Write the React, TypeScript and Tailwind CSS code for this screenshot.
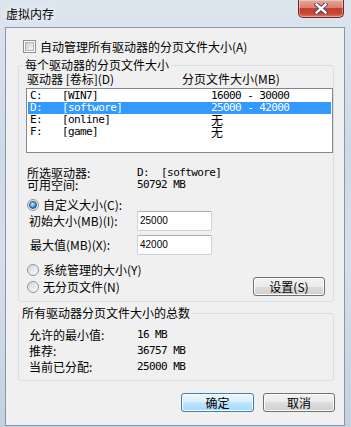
import React from 'react';

const drives = [
  { letter: 'C:', label: '[WIN7]', size: '16000 - 30000', selected: false },
  { letter: 'D:', label: '[softwore]', size: '25000 - 42000', selected: true },
  { letter: 'E:', label: '[online]', size: '无', selected: false },
  { letter: 'F:', label: '[game]', size: '无', selected: false },
];

const MONO = "font-['DejaVu_Sans_Mono',monospace] text-[11px] tracking-[-0.6px]";

function Radio({ checked }: { checked?: boolean }) {
  return (
    <span className="flex h-[12px] w-[12px] shrink-0 items-center justify-center rounded-full border border-[#929598] bg-[linear-gradient(135deg,#d4d7db,#fbfbfb)]">
      {checked && (
        <span className="h-[8px] w-[8px] rounded-full border border-[#1b4e87] bg-[radial-gradient(circle_at_40%_35%,#d6f3ff,#3d97e0_55%,#15558f)]" />
      )}
    </span>
  );
}

function WinButton({
  children,
  primary,
  className,
}: {
  children: React.ReactNode;
  primary?: boolean;
  className?: string;
}) {
  return (
    <button
      className={`flex h-[19px] items-center justify-center rounded-[3px] border text-[12px] leading-none text-black shadow-[inset_0_0_0_1px_#fcfcfc] ${
        primary
          ? 'border-[#3c7fb1] bg-[linear-gradient(#eaf6fd_0%,#d9f0fc_50%,#bee6fd_50%,#a7d9f5_100%)]'
          : 'border-[#707070] bg-[linear-gradient(#f2f2f2_0%,#ebebeb_50%,#dddddd_50%,#cfcfcf_100%)]'
      } ${className ?? ''}`}
    >
      {children}
    </button>
  );
}

export default function App() {
  return (
    <div className="flex h-[427px] w-[351px] flex-col overflow-hidden bg-[linear-gradient(180deg,#dde6ef_0%,#cdd9e6_35%,#d6e0ea_60%,#c3d0df_100%)] font-['Noto_Sans_CJK_SC',sans-serif] text-black">
      {/* Title bar */}
      <div className="flex h-[27px] shrink-0 items-start">
        <span className="pl-[6px] pt-[7px] text-[12px] leading-[14px] [text-shadow:0_0_8px_#ffffff]">
          虚拟内存
        </span>
        <div className="ml-auto mr-[7px] flex h-[18px] w-[46px] items-center justify-center rounded-b-[5px] border border-t-0 border-[#6b2c22] bg-[linear-gradient(#e8a597_0%,#d98171_45%,#c4412f_50%,#c94633_80%,#de7d67_100%)] shadow-[inset_0_0_0_1px_rgba(255,255,255,0.35)]">
          <svg width="14" height="11" viewBox="0 0 14 11">
            <path d="M2.5 1.5 L11.5 9.5 M11.5 1.5 L2.5 9.5" stroke="#3d3f52" strokeWidth="4.2" strokeLinecap="square" />
            <path d="M2.5 1.5 L11.5 9.5 M11.5 1.5 L2.5 9.5" stroke="#ffffff" strokeWidth="2.4" strokeLinecap="square" />
          </svg>
        </div>
      </div>

      {/* Client area */}
      <div className="mb-[1px] ml-[5px] mr-[6px] flex flex-1 flex-col border border-[#8796a8] bg-[#f0f0f0] pl-[12px] pr-[10px] text-[12px]">
        <div className="ml-[5px] mt-[12px] flex h-[13px] items-center gap-[4px] leading-[13px]">
          <span className="flex h-[13px] w-[13px] shrink-0 items-center justify-center border border-[#8e8f8f] bg-white">
            <span className="h-[9px] w-[9px] border border-[#aeb3b9] bg-[linear-gradient(135deg,#cbcfd5,#f6f6f6)]" />
          </span>
          <span>自动管理所有驱动器的分页文件大小(A)</span>
        </div>

        {/* Per-drive group */}
        <fieldset className="mt-[5px] rounded-[3px] border border-[#d5dfe5] pb-[5px] pl-[7px] pr-[8px]">
          <legend className="ml-[-3px] px-[2px] leading-[14px]">每个驱动器的分页文件大小</legend>
          <div className="flex h-[14px] pl-[1px] leading-[14px]">
            <span className="w-[155px]">驱动器 [卷标](D)</span>
            <span>分页文件大小(MB)</span>
          </div>
          <div className="mr-[-8px] mt-[2px] h-[65px] border border-[#828790] bg-white px-[1px] pt-[1px]">
            {drives.map((d) => (
              <div
                key={d.letter}
                className={`grid h-[12px] grid-cols-[32px_149px_1fr] pl-[2px] leading-[12px] ${
                  d.selected ? 'bg-[#3399ff] text-white' : ''
                }`}
              >
                <span className={MONO}>{d.letter}</span>
                <span className={MONO}>{d.label}</span>
                <span className={d.size === '无' ? 'text-[12px]' : MONO}>{d.size}</span>
              </div>
            ))}
          </div>

          <div className="mt-[14px] flex h-[12px] pl-[1px] leading-[12px]">
            <span className="w-[110px]">所选驱动器:</span>
            <span className={`${MONO} whitespace-pre`}>D:  [softwore]</span>
          </div>
          <div className="flex h-[12px] pl-[1px] leading-[12px]">
            <span className="w-[110px]">可用空间:</span>
            <span className={MONO}>50792 MB</span>
          </div>

          <div className="mt-[7px] flex h-[13px] items-center gap-[4px] pl-[1px] leading-[13px]">
            <Radio checked />
            <span>自定义大小(C):</span>
          </div>
          <div className="flex h-[20px] items-center">
            <span className="w-[111px] pl-[3px]">初始大小(MB)(I):</span>
            <div className="flex h-[20px] w-[75px] items-center rounded-[2px] border border-[#cdd1d8] border-t-[#abadb3] bg-white pb-[2px] pl-[2px] font-['Liberation_Sans',sans-serif] text-[10px]">
              25000
            </div>
          </div>
          <div className="mt-[4px] flex h-[20px] items-center">
            <span className="w-[111px] pl-[4px]">最大值(MB)(X):</span>
            <div className="flex h-[20px] w-[75px] items-center rounded-[2px] border border-[#cdd1d8] border-t-[#abadb3] bg-white pb-[2px] pl-[2px] font-['Liberation_Sans',sans-serif] text-[10px]">
              42000
            </div>
          </div>

          <div className="mt-[8px] flex h-[13px] items-center gap-[4px] pl-[1px] leading-[13px]">
            <Radio />
            <span>系统管理的大小(Y)</span>
          </div>
          <div className="mt-[1px] flex h-[19px] items-center justify-between pl-[1px]">
            <div className="flex items-center gap-[4px] leading-[13px]">
              <Radio />
              <span>无分页文件(N)</span>
            </div>
            <WinButton className="w-[72px]">设置(S)</WinButton>
          </div>
        </fieldset>

        {/* Totals group */}
        <fieldset className="mt-[4px] rounded-[3px] border border-[#d5dfe5] pb-[5px] pl-[7px] pr-[8px] pt-[7px]">
          <legend className="ml-[-6px] px-[2px] leading-[14px]">所有驱动器分页文件大小的总数</legend>
          <div className="flex h-[16px] pl-[3px] leading-[16px]">
            <span className="w-[108px]">允许的最小值:</span>
            <span className={MONO}>16 MB</span>
          </div>
          <div className="flex h-[16px] pl-[3px] leading-[16px]">
            <span className="w-[108px]">推荐:</span>
            <span className={MONO}>36757 MB</span>
          </div>
          <div className="flex h-[16px] pl-[3px] leading-[16px]">
            <span className="w-[108px]">当前已分配:</span>
            <span className={MONO}>25000 MB</span>
          </div>
        </fieldset>

        <div className="mr-[-1px] mt-[12px] flex justify-end gap-[9px]">
          <WinButton primary className="w-[73px]">确定</WinButton>
          <WinButton className="w-[72px]">取消</WinButton>
        </div>
      </div>
    </div>
  );
}
